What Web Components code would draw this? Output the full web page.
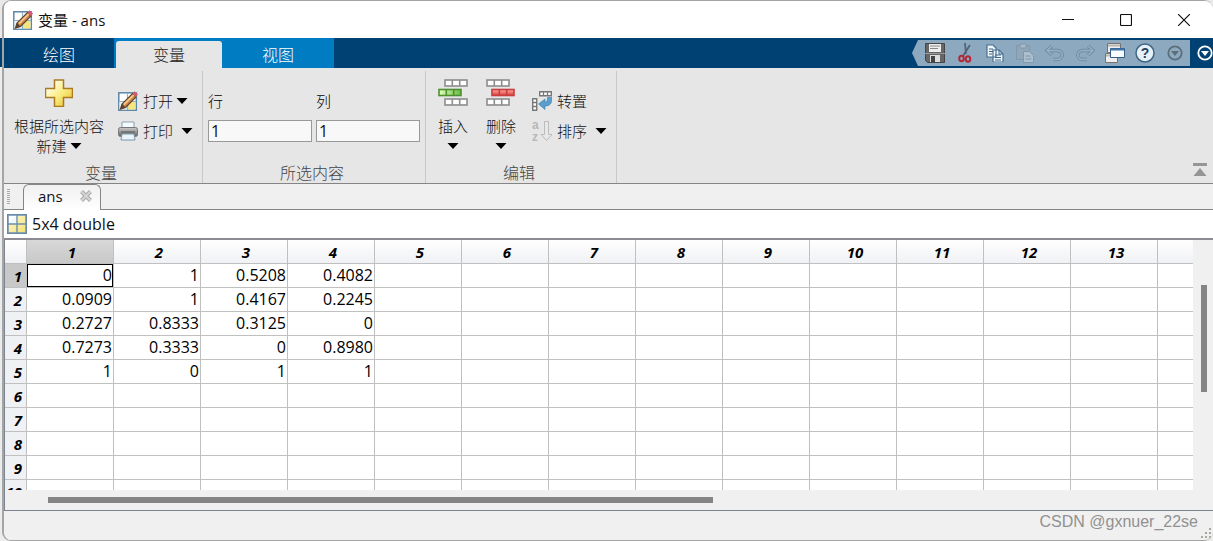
<!DOCTYPE html>
<html lang="zh-CN">
<head>
<meta charset="utf-8">
<title>变量 - ans</title>
<style>
html, body { height: 100%; margin: 0; }
body { overflow: hidden; background: #f0f0f0; color: #111; font: 15px/20px "Open Sans", "Noto Sans CJK SC", sans-serif; }
</style>
</head>
<body>
<var-window></var-window>
<script>
const define = (name, css, html) => {
  customElements.define(name, class extends HTMLElement {
    connectedCallback() {
      if (this.shadowRoot) return;
      const root = this.attachShadow({ mode: 'open' });
      const t = document.createElement('template');
      t.innerHTML = `<style>*{box-sizing:border-box}button{font:inherit;color:inherit;background:none;border:0;padding:0;margin:0}svg{display:block;flex:none}${css}</style>${typeof html === 'function' ? html(this) : html}`;
      root.append(t.content.cloneNode(true));
    }
  });
};

const strip = (x, y, fill, line) => `<rect x="${x + 1}" y="${y + 1}" width="22" height="6" fill="${fill}" stroke="${line}" stroke-width="1.6"/><path d="M${x + 8.3} ${y + 1}v6M${x + 15.7} ${y + 1}v6" stroke="${line}" stroke-width="1.6"/>`;
const bend = 'M7 3 2 7.500l5 4.500M3 7.500h9c7 0 7 9 0 9H8';
const icons = {
  grid: [20, `<defs><linearGradient id="y" x2="1" y2="1"><stop stop-color="#fffbd8"/><stop offset="1" stop-color="#f4df6d"/></linearGradient></defs><rect x=".5" y=".5" width="19" height="19" fill="#fff" stroke="#5c82a3"/><path d="M10 1h9v18h-9zM1 10h9v9H1z" fill="url(#y)"/><path d="M10 1v9H1" fill="#f1f8fc"/><path d="M10 1v18M1 10h18" stroke="#6c90ae" stroke-width="1.4"/><path d="M1 1h18v18H1z" fill="none" stroke="#6c90ae" stroke-width="1.500"/>`],
  edit: [20, `<rect x=".8" y="1.800" width="17.500" height="17.400" fill="#fff" stroke="#5c87a6" stroke-width="1.500"/><path d="M10 10.500h7.500v8H10z" fill="#f3e582"/><path d="M1.500 10.500h8v8h-8z" fill="#edf4f7"/><path d="M9.500 2v17M1 10.500h17" stroke="#88b4d0" stroke-width="1.200"/><path d="M2.500 18 4 13 14.500 2.500l3.500 3.500L7.500 16.500z" fill="#c9884a" stroke="#64422b" stroke-width="1.200"/><path d="M6 13.500 15.800 3.800" stroke="#f6c585" stroke-width="1.800"/><path d="m14.500 2.500 2.200-2.200L20 3.600 17.700 6z" fill="#d65a78"/><path d="m2.500 18 1.500-5 3.500 3.500z" fill="#56402e"/>`],
  plus: [28, `<defs><linearGradient id="g" x2="1" y2="1"><stop offset=".15" stop-color="#fffde9"/><stop offset=".55" stop-color="#faec7e"/><stop offset="1" stop-color="#e5b827"/></linearGradient></defs><path d="M9.5 1h9v8.500h9v9h-9v9h-9v-9h-9v-9h9z" fill="url(#g)" stroke="#aa7a22" stroke-width="1.500"/>`],
  print: [20, `<defs><linearGradient id="p" x2="0" y2="1"><stop stop-color="#ccc"/><stop offset="1" stop-color="#626262"/></linearGradient></defs><path d="M4 7V1h12v6" fill="#f5faff" stroke="#8ba1b2"/><rect x=".5" y="6.500" width="19" height="9" rx="2" fill="url(#p)" stroke="#777"/><path d="M3 11h14" stroke="#555"/><path d="M4 13h12l1 6H3z" fill="#eaf4fb" stroke="#7895a9"/>`],
  insert: [30, `<defs><linearGradient id="i" x2="1"><stop stop-color="#e1ffbb"/><stop offset="1" stop-color="#69b941"/></linearGradient></defs>${strip(6, 0, '#fff', '#8d8d8d')}${strip(6, 19, '#fff', '#8d8d8d')}${strip(0, 9.5, 'url(#i)', '#4d9130')}`, 28],
  remove: [30, `<defs><linearGradient id="r" x2="0" y2="1"><stop stop-color="#ffaaa2"/><stop offset="1" stop-color="#d9403d"/></linearGradient></defs>${strip(0, 0, '#fff', '#8d8d8d')}${strip(0, 19, '#fff', '#8d8d8d')}${strip(5, 9.5, 'url(#r)', '#c93e3e')}`, 28],
  transpose: [20, `<path d="M7.700.700h11.600v4H7.700zM.700 7.700h4v11.600h-4z" fill="#fff" stroke="#777" stroke-width="1.400"/><path d="M11.500 0v5M15.500 0v5M0 11.500h5M0 15.500h5" stroke="#777" stroke-width="1.300"/><path d="M15.500 6.500H20c0 6-2 8.500-7 8.500v3.500L6.500 13 13 8v3c2 0 2.500-1 2.500-4.500z" fill="#5b9dcd" stroke="#397aa9" stroke-width=".6"/>`],
  sort: [20, `<g fill="#b8b8b8" font-family="Liberation Sans" font-weight="700" font-size="12"><text x="0" y="8">a</text><text x="0" y="20">z</text></g><path d="M12.500.500h4v13H20l-5.500 6-5.500-6h3.500z" fill="#e8e8e8" stroke="#bbb"/>`],
  save: [20, `<path d="M.500.500h19v19h-17l-2-2z" fill="#666" stroke="#454545"/><path d="M4 1h12v8H4z" fill="#eee"/><path d="M5 3h10M5 5.500h8" stroke="#888"/><path d="M0 10.500h20" stroke="#999"/><path d="M5 12h10v7H5z" fill="#ddd"/><path d="M6 13h4v6H6z" fill="#444"/>`],
  cut: [14, `<path d="M7 0 8 11M12 2 5 13" stroke="#536474" stroke-width="1.800"/><g fill="none" stroke="#b42836" stroke-width="2"><ellipse cx="3.500" cy="15.500" rx="2.300" ry="2.800"/><ellipse cx="10" cy="16" rx="2.300" ry="2.800"/></g>`, 20],
  copy: [18, `<g fill="#eff6fa" stroke="#476f90" stroke-width="1.200"><path d="M1 1h6l3 3v9H1zM7 6h6l4 4v8H7z"/></g><path d="M3 5h4M3 7.500h4M3 10h3M9 11h6M9 13.500h6M9 16h6M13 6v4h4" fill="none" stroke="#3c6388"/>`],
  paste: [20, `<g fill="#91a7b8" stroke="#7e98ad"><path d="M1.500 2.500h13v14h-13z"/><path d="M5 1h6v4H5z" fill="#a9bac8"/><path d="M8.500 8.500h6l4 4v7h-10z" fill="#adc0cf"/></g><path d="M10.500 13h5M10.500 16h6" stroke="#7894aa"/>`],
  undo: [20, `<path d="${bend}" fill="none" stroke="#708da5" stroke-width="3.500"/><path d="${bend}" fill="none" stroke="#96afc2" stroke-width="1.500"/>`],
  redo: [20, `<g transform="matrix(-1 0 0 1 20 0)"><path d="${bend}" fill="none" stroke="#708da5" stroke-width="3.500"/><path d="${bend}" fill="none" stroke="#96afc2" stroke-width="1.500"/></g>`],
  windows: [20, `<g fill="#eee" stroke="#75736f"><path d="M2.500.500h13v9h-13zM.500 10.500h12v9H.500z"/><path d="M5.500 5.500h14v9h-14z" fill="#f8fcff" stroke="#355d85"/></g><path d="M3 2.500h12M1 12.500h4" stroke="#b8b5ae" stroke-width="2"/><path d="M6 6.500h13" stroke="#3e75ac" stroke-width="2"/>`],
  help: [20, `<circle cx="10" cy="10" r="9" fill="#e7f0f7" stroke="#3f6685" stroke-width="1.500"/><text x="10" y="15" text-anchor="middle" font-family="Liberation Sans" font-weight="700" font-size="14" fill="#24445f">?</text>`],
  down: [16, `<circle cx="8" cy="8" r="6.700" fill="none" stroke="currentColor" stroke-width="1.800"/><path d="M4 6h8l-4 5z" fill="currentColor"/>`],
  min: [12, `<path d="M0 5.500h12" stroke="#111"/>`],
  max: [12, `<rect x=".500" y=".500" width="11" height="11" rx="1" fill="none" stroke="#111" stroke-width="1.200"/>`],
  close: [12, `<path d="m0 0 12 12M12 0 0 12" stroke="#111" stroke-width="1.200"/>`],
  arrow: [12, `<path d="M.500 0h11L6 6z" fill="#000"/>`, 6],
  collapse: [14, `<path d="M0 1.500h14" stroke="#939693" stroke-width="3"/><path d="m7 5 6.500 8H.500z" fill="#939693"/>`],
  tabclose: [12, `<path d="m1.500 1.500 9 9M10.500 1.500l-9 9" stroke="#a8a8a8" stroke-width="4"/><path d="m1.500 1.500 9 9M10.500 1.500l-9 9" stroke="#d6d6d6" stroke-width="1.800"/>`]
};
define('app-icon', ':host{display:block;flex:none}', el => {
  const [w, body, h] = icons[el.getAttribute('name')];
  return `<svg width="${w}" height="${h || w}" viewBox="0 0 ${w} ${h || w}" aria-hidden="true">${body}</svg>`;
});

define('title-bar', `
:host{display:flex;align-items:center;height:37px;background:#fff;padding:0 0 0 9px}
h1{flex:1;margin:0 0 0 5px;font-weight:400;font-size:15px;line-height:20px}
button{width:58px;height:36px;display:grid;place-items:center}`,
`<app-icon name="edit"></app-icon><h1>变量 - ans</h1>
<button aria-label="最小化"><app-icon name="min"></app-icon></button><button aria-label="最大化"><app-icon name="max"></app-icon></button><button aria-label="关闭"><app-icon name="close"></app-icon></button>`);

define('quick-tools', `
:host{display:flex;align-items:center;color:#fff}
.bar{height:26px;width:278px;display:flex;align-items:center;padding-left:8px;background:#8da9c0;clip-path:polygon(6px 0,100% 0,100% 100%,6px 100%,0 50%)}
.bar button{flex:1;display:grid;place-items:center}
.bar button:last-child{color:#5c6e7a}.more{margin-left:7px}`,
`<div class="bar">${[['save','保存'],['cut','剪切'],['copy','复制'],['paste','粘贴'],['undo','撤消'],['redo','重做'],['windows','切换窗口'],['help','帮助'],['down','自定义']].map(([i, n]) => `<button aria-label="${n}"><app-icon name="${i}"></app-icon></button>`).join('')}</div><button class="more" aria-label="更多"><app-icon name="down"></app-icon></button>`);

define('ribbon-tabs', `
:host{display:flex;justify-content:space-between;height:30px;background:#004173;color:#fff;font-weight:300}
nav{display:flex}button{width:110px;height:30px;padding-top:4px;font-size:16px;line-height:24px}
.blue{display:flex;background:#007cc3;padding-left:2px}.blue button{width:112px}
.blue .on{width:106px;height:27px;margin-top:3px;padding-top:1px;background:#e6e6e6;color:#222;border-radius:3px 3px 0 0}`,
`<nav><button>绘图</button><div class="blue"><button class="on">变量</button><button>视图</button></div></nav><quick-tools></quick-tools>`);

define('tool-group', `
:host{display:flex;flex-direction:column;height:112px;border-right:1px solid #c8c8c8;color:#111;font-weight:300}
.body{flex:1;display:flex}
h2{margin:0;padding-right:4px;text-align:center;font-weight:300;font-size:16px;line-height:20px;color:#444}`,
el => `<div class="body"><slot></slot></div><h2>${el.getAttribute('label')}</h2>`);

define('big-tool', `
:host{display:block}
button{width:100%;display:flex;flex-direction:column;align-items:center;padding-top:8px}
.text{display:block;margin-top:9px;line-height:20px}.line{display:flex;align-items:center;gap:3px;height:20px}`,
el => `<button><app-icon name="${el.getAttribute('icon')}"></app-icon><span class="text">${el.getAttribute('label')}</span><span class="line">${el.getAttribute('second') || ''}<app-icon name="arrow"></app-icon></span></button>`);

define('small-tool', `
:host{display:block}button{display:flex;align-items:center;height:30px;gap:5px}
.arrow{margin-left:var(--arrow-gap,-2px)}`,
el => `<button><app-icon name="${el.getAttribute('icon')}"></app-icon><span>${el.getAttribute('label')}</span>${el.hasAttribute('menu') ? '<app-icon class="arrow" name="arrow"></app-icon>' : ''}</button>`);

define('number-field', `
:host{display:block;width:104px}label{display:block;height:30px;line-height:30px;margin-top:15px;color:#000}
input{display:block;width:100%;height:22px;margin-top:4px;border:1px solid #999;background:#f8f8f8;padding:0 2px 1px;font:inherit;font-weight:400;font-size:16px;line-height:20px;color:#111;border-radius:0;outline:0}`,
el => `<label for="n">${el.getAttribute('label')}</label><input id="n" value="1">`);

define('tool-ribbon', `
:host{display:flex;align-items:flex-start;height:116px;padding-top:3px;background:#e6e6e6;border-bottom:1px solid #858585}
.vars{width:199px}.sel{width:223px}.edit{width:191px}
.new{width:110px}.stack{padding-top:15px}.vars .stack{margin-left:4px}
.sel number-field{margin-left:5px}.sel number-field + number-field{margin-left:4px}
.ins{width:48px;margin-left:3px}.edit .stack{margin-left:7px}.del{width:48px}.wide{--arrow-gap:3px}
.fold{margin:92px 6px 0 auto}`,
`<tool-group class="vars" label="变量"><big-tool class="new" icon="plus" label="根据所选内容" second="新建"></big-tool><div class="stack"><small-tool icon="edit" label="打开" menu></small-tool><small-tool class="wide" icon="print" label="打印" menu></small-tool></div></tool-group>
<tool-group class="sel" label="所选内容"><number-field label="行"></number-field><number-field label="列"></number-field></tool-group>
<tool-group class="edit" label="编辑"><big-tool class="ins" icon="insert" label="插入"></big-tool><big-tool class="del" icon="remove" label="删除"></big-tool><div class="stack"><small-tool icon="transpose" label="转置"></small-tool><small-tool class="wide" icon="sort" label="排序" menu></small-tool></div></tool-group>
<button class="fold" aria-label="折叠"><app-icon name="collapse"></app-icon></button>`);

define('document-tabs', `
:host{display:flex;height:26px;background:#f0f0f0;border-bottom:1px solid #858585;padding-left:3px}
.grip{width:3px;height:16px;margin-top:5px;background:repeating-linear-gradient(#aaa 0 1px,transparent 1px 2px)}
.tab{display:flex;align-items:center;justify-content:space-between;width:78px;height:26px;margin-left:13px;padding:0 8px 4px 14px;border:1px solid #858585;border-bottom:0;border-radius:6px 6px 0 0;background:linear-gradient(#f0f0f0,#fff)}`,
`<span class="grip"></span><div class="tab"><span>ans</span><button aria-label="关闭 ans"><app-icon name="tabclose"></app-icon></button></div>`);

define('data-grid', `
:host{display:block;overflow:hidden;background:#fff;font-size:16px;color:#000}
table{table-layout:fixed;border-collapse:separate;border-spacing:0;width:1240px}
.h{width:22px}.c{width:87px}
tr{height:24px}td,th{height:24px;padding:0 1px 2px 0;border-right:1px solid #c0c0c0;border-bottom:1px solid #c0c0c0;line-height:20px;white-space:nowrap}
td{text-align:right}th{font-weight:700;font-style:italic;font-size:15px}
thead th{background:linear-gradient(#fff,#f0f1f4);padding:0 0 0 4px}tbody th{background:#f0f1f4;text-align:right;padding:0 4px 0 0}
thead th.on{background:linear-gradient(#d8d8d8,#c8c8c8)}tbody th.on{background:#c8c8c8}
td.on{box-shadow:inset 0 0 0 1px #000}`,
() => {
  const data = [['0','1','0.5208','0.4082'],['0.0909','1','0.4167','0.2245'],['0.2727','0.8333','0.3125','0'],['0.7273','0.3333','0','0.8980'],['1','0','1','1']];
  const cols = Array.from({ length: 14 }, (_, i) => i);
  return `<table><colgroup><col class="h">${cols.map(() => '<col class="c">').join('')}</colgroup><thead><tr><th></th>${cols.map(i => `<th class="${i ? '' : 'on'}">${i < 13 ? i + 1 : ''}</th>`).join('')}</tr></thead><tbody>${Array.from({ length: 10 }, (_, r) => `<tr><th class="${r ? '' : 'on'}">${r + 1}</th>${cols.map(c => `<td class="${r + c ? '' : 'on'}">${(data[r] || [])[c] || ''}</td>`).join('')}</tr>`).join('')}</tbody></table>`;
});

define('variable-view', `
:host{display:flex;flex-direction:column;min-height:0}
header{height:30px;flex:none;display:flex;align-items:center;gap:5px;padding-left:3px;background:#fff;border-bottom:2px solid #8c8a93;font-size:16px}
.main{flex:1;min-height:0;display:grid;grid-template:minmax(0,1fr) 20px/minmax(0,1fr) 20px;background:#f0f0f0;border-left:1px solid #7b858f;border-bottom:1px solid #7b858f}
.v{padding:45px 6px 98px 8px}.v i{display:block;height:100%;background:#858585}
.hs{padding:7px 480px 7px 43px}.hs i{display:block;height:100%;background:#858585}`,
`<header><app-icon name="grid"></app-icon><span>5x4 double</span></header><div class="main"><data-grid></data-grid><div class="v"><i></i></div><div class="hs"><i></i></div></div>`);

define('status-bar', `
:host{display:flex;justify-content:flex-end;gap:3px;height:29px;background:#f0f0f0;font:16px/22px "Liberation Sans",sans-serif;color:#919191}
svg{margin-top:17px}`,
`<span>CSDN @gxnuer_22se</span><svg width="12" height="12" viewBox="0 0 12 12"><path d="M8 0h2v2H8zM4 4h2v2H4zM8 4h2v2H8zM0 8h2v2H0zM4 8h2v2H4zM8 8h2v2H8z" fill="#aaa79a"/></svg>`);

define('var-window', `
:host{display:block;height:100vh;padding-left:2px;background:linear-gradient(#e9e9e9 0 38px,#004173 38px 67px,#ececec 67px)}
.win{height:100%;display:flex;flex-direction:column;overflow:hidden;border:1px solid #a5a5a5;border-left-width:2px;border-right:0;border-radius:9px}
variable-view{flex:1}title-bar,ribbon-tabs,tool-ribbon,document-tabs,status-bar{flex:none}`,
`<div class="win"><title-bar></title-bar><ribbon-tabs></ribbon-tabs><tool-ribbon></tool-ribbon><document-tabs></document-tabs><variable-view></variable-view><status-bar></status-bar></div>`);
</script>
</body>
</html>
